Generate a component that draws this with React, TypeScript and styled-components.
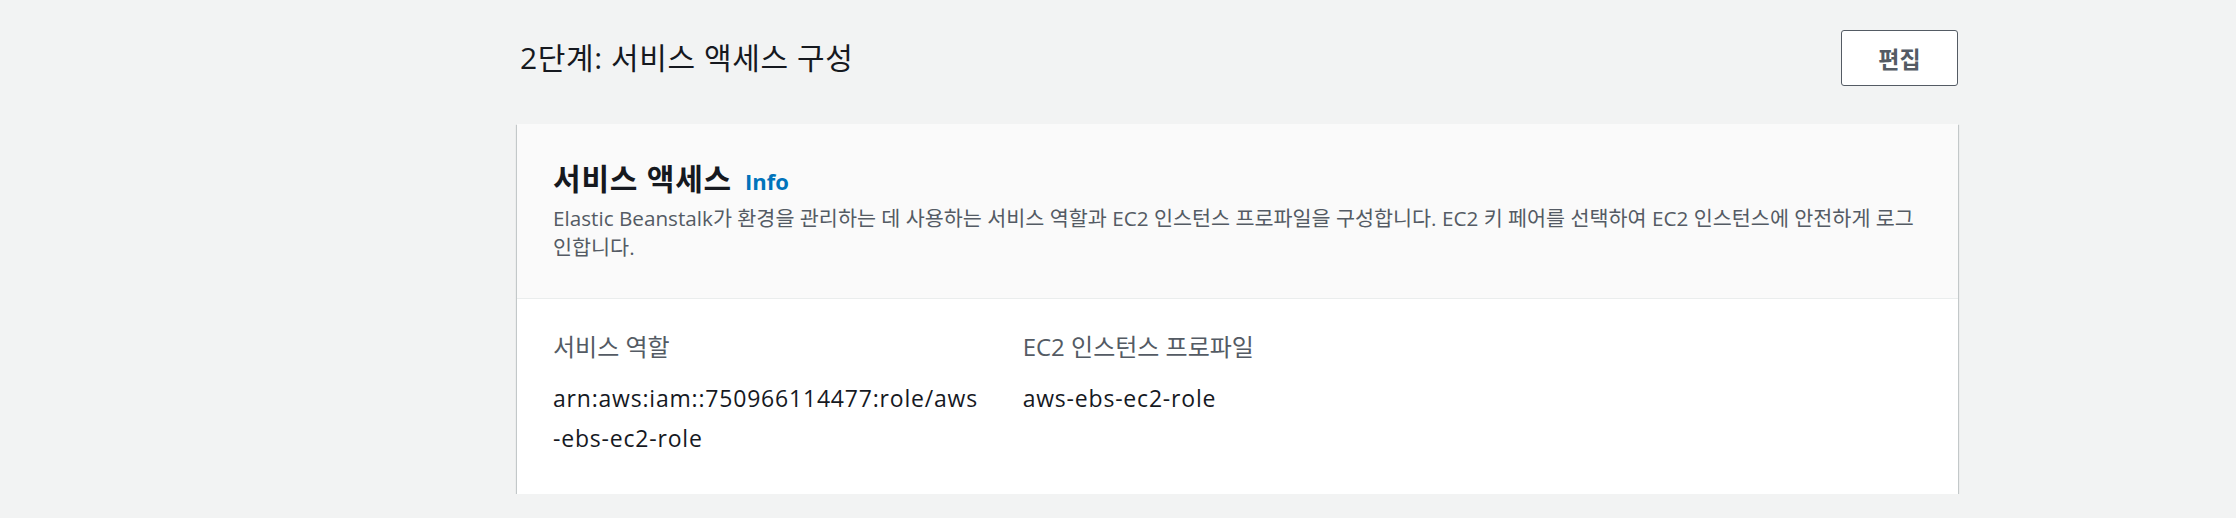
import * as React from 'react';
import styled, {createGlobalStyle} from 'styled-components';

const GlobalStyle = createGlobalStyle`
    html, body { margin: 0; padding: 0; background: #f2f3f3; }
    body {
        font-family: "Open Sans", "Noto Sans CJK KR", sans-serif;
        color: #16191f;
        -webkit-font-smoothing: antialiased;
    }
`;

const App = () => {
    return (<>
        <GlobalStyle />
        <Page>
            <StepHeader>
                <StepTitle>2단계: 서비스 액세스 구성</StepTitle>
                <EditButton type="button">편집</EditButton>
            </StepHeader>
            <Card>
                <CardHeader>
                    <CardTitle>
                        서비스 액세스<InfoLink href="#">Info</InfoLink>
                    </CardTitle>
                    <Description>
                        Elastic Beanstalk가 환경을 관리하는 데 사용하는 서비스 역할과 EC2 인스턴스 프로파일을 구성합니다. EC2 키 페어를 선택하여 EC2 인스턴스에 안전하게 로그인합니다.
                    </Description>
                </CardHeader>
                <CardBody>
                    <Field>
                        <Label>서비스 역할</Label>
                        <Value>arn:aws:iam::750966114477:role/aws-ebs-ec2-role</Value>
                    </Field>
                    <Field>
                        <Label>EC2 인스턴스 프로파일</Label>
                        <Value>aws-ebs-ec2-role</Value>
                    </Field>
                    <Field />
                </CardBody>
            </Card>
        </Page>
    </>);
};

export default App;

const Page = styled.div`
    width: 1441px;
    margin-left: 517px;
    padding-top: 30px;
`;

const StepHeader = styled.div`
    display: flex; justify-content: space-between; align-items: center;
    height: 56px;
    margin-bottom: 38px;
`;

const StepTitle = styled.h2`
    margin: 0 0 0 3px;
    font-size: 30px; font-weight: 400; line-height: 40px; letter-spacing: 0.6px;
    color: #16191f;
`;

const EditButton = styled.button`
    width: 117px; height: 56px;
    background: #fff;
    border: 1.5px solid #545b64; border-radius: 3px;
    font-family: inherit; font-size: 23px; font-weight: 700;
    color: #545b64;
    cursor: pointer;
`;

const Card = styled.div`
    background: #fff;
    box-shadow: 0 1px 1px 0 rgba(0,28,36,.3), 1px 1px 1px 0 rgba(0,28,36,.15), -1px 1px 1px 0 rgba(0,28,36,.15);
`;

const CardHeader = styled.div`
    background: #fafafa;
    border-bottom: 1px solid #eaeded;
    padding: 35px 36px 36px;
`;

const CardTitle = styled.h3`
    margin: 0;
    font-size: 30px; font-weight: 700; line-height: 40px; letter-spacing: 0.8px;
    color: #16191f;
`;

const InfoLink = styled.a`
    margin-left: 13px;
    font-size: 22px; font-weight: 700; letter-spacing: 0;
    color: #0073bb; text-decoration: none;
`;

const Description = styled.div`
    margin-top: 3px;
    font-size: 20.7px; line-height: 29px;
    color: #545b64;
`;

const CardBody = styled.div`
    display: grid; grid-template-columns: repeat(3, 1fr); column-gap: 40px;
    padding: 32px 36px 36px;
`;

const Field = styled.div`
    display: flex; flex-direction: column; gap: 15px;
`;

const Label = styled.div`
    font-size: 24px; line-height: 32px;
    color: #545b64;
`;

const Value = styled.div`
    font-size: 23px; line-height: 40px; letter-spacing: 0.8px;
    color: #16191f;
    word-break: break-all;
`;
